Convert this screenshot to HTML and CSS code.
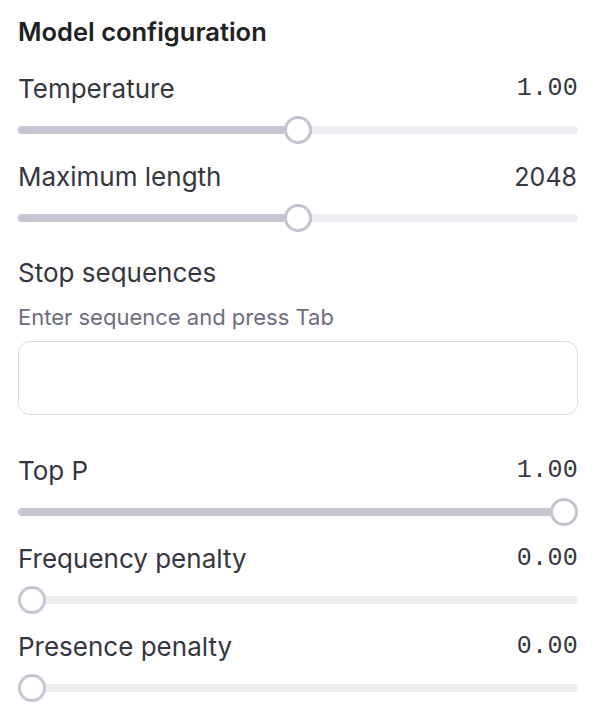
FILE: index.html
```html
<!DOCTYPE html>
<html lang="en">
<head>
<meta charset="utf-8">
<title>Model configuration</title>
<link rel="stylesheet" href="styles.css">
</head>
<body>
<div class="panel">
  <h2 class="panel-title">Model configuration</h2>

  <div class="field">
    <div class="field-head">
      <span class="field-label">Temperature</span>
      <span class="field-value mono">1.00</span>
    </div>
    <div class="slider">
      <div class="track"><div class="fill" style="width:50%"></div></div>
      <div class="thumb" style="left:50%"></div>
    </div>
  </div>

  <div class="field">
    <div class="field-head">
      <span class="field-label">Maximum length</span>
      <span class="field-value num">2048</span>
    </div>
    <div class="slider">
      <div class="track"><div class="fill" style="width:50%"></div></div>
      <div class="thumb" style="left:50%"></div>
    </div>
  </div>

  <div class="field field-stop">
    <div class="field-head">
      <span class="field-label">Stop sequences</span>
    </div>
    <div class="field-help">Enter sequence and press Tab</div>
    <textarea class="seq-input"></textarea>
  </div>

  <div class="field">
    <div class="field-head">
      <span class="field-label">Top P</span>
      <span class="field-value mono">1.00</span>
    </div>
    <div class="slider">
      <div class="track"><div class="fill" style="width:100%"></div></div>
      <div class="thumb" style="left:100%"></div>
    </div>
  </div>

  <div class="field">
    <div class="field-head">
      <span class="field-label">Frequency penalty</span>
      <span class="field-value mono">0.00</span>
    </div>
    <div class="slider">
      <div class="track"><div class="fill" style="width:0%"></div></div>
      <div class="thumb" style="left:0%"></div>
    </div>
  </div>

  <div class="field">
    <div class="field-head">
      <span class="field-label">Presence penalty</span>
      <span class="field-value mono">0.00</span>
    </div>
    <div class="slider">
      <div class="track"><div class="fill" style="width:0%"></div></div>
      <div class="thumb" style="left:0%"></div>
    </div>
  </div>
</div>
</body>
</html>
```

FILE: styles.css
```css
body {
  margin: 0;
  background-color: #ffffff;
  font-family: Inter, "Noto Sans", sans-serif;
  color: #353740;
}
.panel {
  width: 560px;
  padding: 16px 22px 0 18px;
}
.panel-title {
  margin: 0 0 25px 0;
  font-size: 25.5px;
  line-height: 32px;
  font-weight: 600;
  color: #202123;
}
.field {
  margin-bottom: 17px;
}
.field-head {
  display: flex;
  justify-content: space-between;
  align-items: center;
  height: 32px;
  margin-bottom: 11px;
}
.field-label {
  font-size: 26px;
  line-height: 32px;
}
.field-value {
  font-size: 24px;
  line-height: 32px;
}
.num {
  font-size: 25px;
  margin-right: 1px;
}
.mono {
  font-family: "Liberation Mono", "DejaVu Sans Mono", monospace;
  font-size: 25px;
  letter-spacing: 0.3px;
}
.slider {
  position: relative;
  height: 28px;
  margin: 0 14px;
}
.track {
  position: absolute;
  top: 10px;
  left: -14px;
  right: -14px;
  height: 8px;
  border-radius: 4px;
  background-color: #ececf1;
  overflow: hidden;
}
.fill {
  height: 100%;
  background-color: #c5c5d2;
  padding-left: 14px;
}
.thumb {
  position: absolute;
  top: 0;
  width: 28px;
  height: 28px;
  margin-left: -14px;
  box-sizing: border-box;
  border: 3px solid #c5c5d2;
  border-radius: 50%;
  background-color: #ffffff;
}
.field-stop {
  margin-top: 25px;
  margin-bottom: 40px;
}
.field-stop .field-head {
  margin-bottom: 14px;
}
.field-help {
  font-size: 22px;
  line-height: 28px;
  color: #6e6e80;
  margin-bottom: 10px;
}
.seq-input {
  display: block;
  width: 100%;
  height: 74px;
  box-sizing: border-box;
  border: 1.5px solid #d9d9e3;
  border-radius: 12px;
  resize: none;
  font-family: inherit;
  font-size: 20px;
  padding: 10px 14px;
  outline: none;
}
```
